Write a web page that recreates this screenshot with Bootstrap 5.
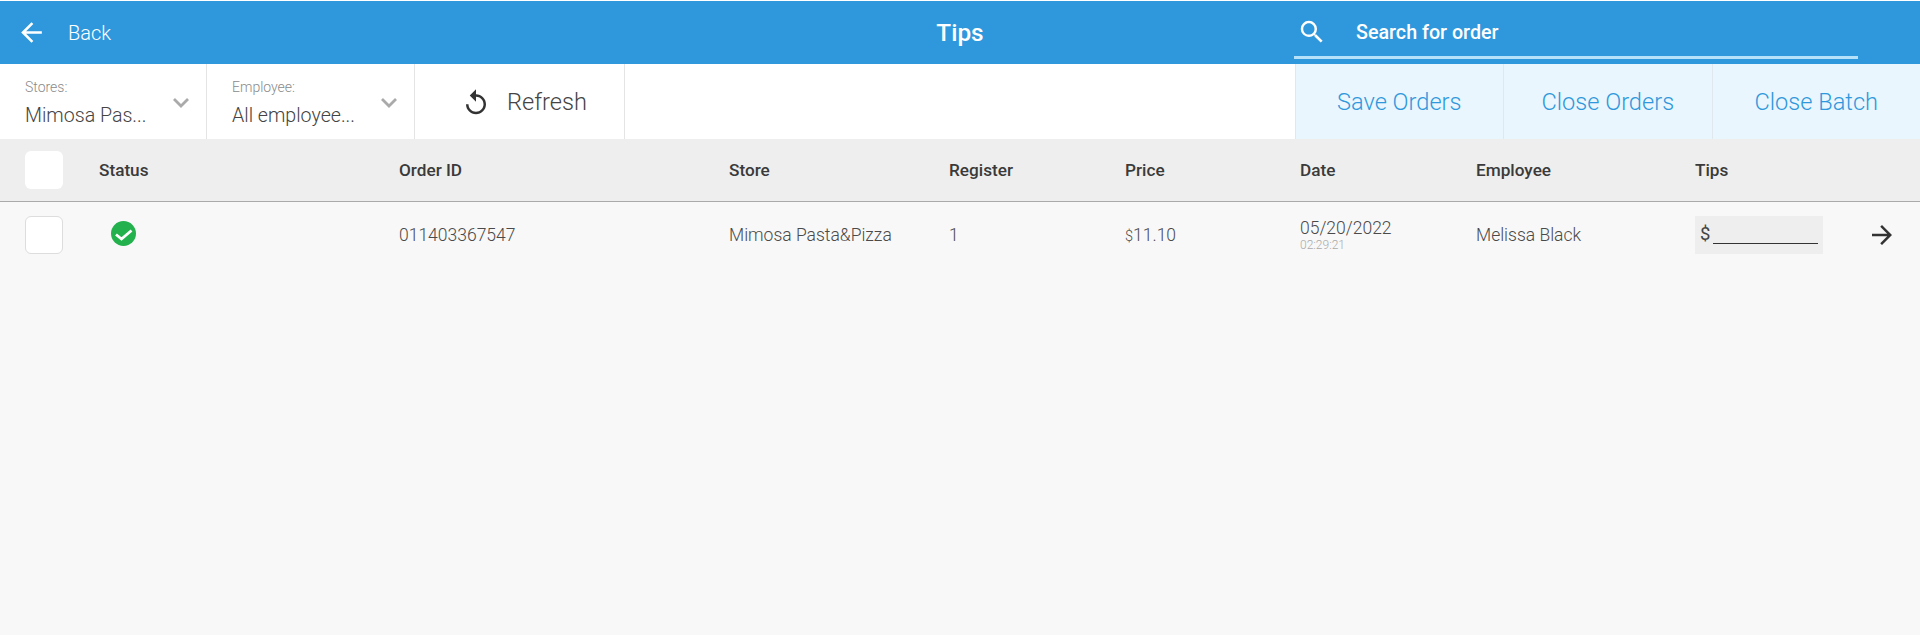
<!doctype html>
<html lang="en"><head><meta charset="utf-8"><title>Tips</title>
<link href="https://cdn.jsdelivr.net/npm/bootstrap@5.3.0/dist/css/bootstrap.min.css" rel="stylesheet">
<style>
html,body{height:100%}
body{font-family:Roboto,"Liberation Sans",sans-serif;background:#f8f8f8;color:#333;overflow:hidden}
.top-edge{height:1px;background:#fff}
.app-head{height:63px;background:#2f98dc;color:#fff}
.head-side{flex:0 0 1294px}
.back-link{color:#fff;text-decoration:none;font-weight:300;font-size:20px;padding-left:16px;gap:21px}
.head-title{font-size:24.4px;font-weight:500;left:960px;top:0;transform:translateX(-50%);line-height:64px}
.search-box{width:564px;height:58px;border-bottom:3px solid #b5e1fa;padding:4px 0 0 3px;gap:29px}
.search-field{background:transparent;border:0;outline:0;color:#fff;font-size:19.7px;font-weight:500;padding:5px 0 0;width:400px}
.search-field::placeholder{color:#fff;opacity:1}
.search-ico{margin-top:3px}
.tool-row{height:75px;background:#fff}
.pick-cell{border-right:1px solid #e4e4e4;width:207px;padding:0 16px 0 25px}
.pick-cell+.pick-cell{width:208px;padding-left:25px}
.pick-label{font-size:14px;font-weight:300;color:#8a8a8a;line-height:18px}
.pick-value{font-size:19.6px;font-weight:300;color:#444;line-height:26px;margin-top:7px}
.pick-text{margin-top:3px}
.pick-arrow{margin-top:2px}
.refresh-cell{width:210px;border-right:1px solid #e4e4e4;font-size:23.6px;font-weight:300;gap:16px;color:#444;padding:2px 0 0 46px}
.act-cell{width:208.5px;background:#e9f6fd;border-left:1px solid #dfe8ed;color:#2f98dc;font-size:23.6px;font-weight:300;padding-top:2px}
.grid-cols{display:grid;grid-template-columns:74px 300px 330px 220px 176px 175px 176px 219px 1fr;padding-left:25px;align-items:center}
.table-head{height:63px;background:#eee;border-bottom:1px solid #aaa;font-size:17.2px;font-weight:500;color:#3a3a3a;padding-top:1px}
.head-box{margin-top:-1px}
.table-line{height:66px;font-size:17.5px;font-weight:300;color:#4a4a4a}
.tick-box{width:38px;height:38px;background:#fff;border-radius:6px}
.tick-line{border:1px solid #ddd}
.status-ico{margin:-3px 0 0 12px}
.dollar-small{font-size:14.5px}
.date-sub{font-size:12px;color:#aaa;line-height:13px;margin-top:1px}
.date-main{line-height:20px}
.tip-field{width:128px;height:38px;background:#eee;padding:0 5px;gap:3px;font-size:18.5px;font-weight:400;color:#444}
.tip-blank{flex:1;border-bottom:1px solid #333;height:28px;align-self:flex-start}
.row-arrow{margin-right:23px}
</style></head>
<body>
<div class="top-edge"></div>
<header class="app-head d-flex align-items-start position-relative">
  <div class="head-side align-self-stretch d-flex align-items-center">
    <a class="back-link d-flex align-items-center" href="#">
      <svg width="31" height="31" viewBox="0 0 24 24" fill="#fff"><path d="M20 11H7.83l5.59-5.59L12 4l-8 8 8 8 1.41-1.41L7.83 13H20z"/></svg><span>Back</span></a>
  </div>
  <div class="head-title position-absolute">Tips</div>
  <div class="search-box d-flex align-items-center">
    <svg class="search-ico" width="30" height="30" viewBox="0 0 24 24" fill="#fff"><path d="M15.5 14h-.79l-.28-.27A6.47 6.47 0 0 0 16 9.5 6.5 6.5 0 1 0 9.5 16c1.61 0 3.09-.59 4.23-1.57l.27.28v.79l5 4.99L20.49 19l-4.99-5zm-6 0C7.01 14 5 11.99 5 9.5S7.01 5 9.5 5 14 7.01 14 9.5 11.99 14 9.5 14z"/></svg>
    <input class="search-field" type="text" placeholder="Search for order">
  </div>
</header>
<div class="tool-row d-flex">
  <div class="pick-cell d-flex align-items-center justify-content-between">
    <div class="pick-text"><div class="pick-label">Stores:</div><div class="pick-value">Mimosa Pas...</div></div>
    <svg class="pick-arrow" width="18" height="12" viewBox="0 0 18 12" fill="none" stroke="#aaa" stroke-width="2.8"><path d="M2 2l7 7 7-7"/></svg>
  </div>
  <div class="pick-cell d-flex align-items-center justify-content-between">
    <div class="pick-text"><div class="pick-label">Employee:</div><div class="pick-value">All employee...</div></div>
    <svg class="pick-arrow" width="18" height="12" viewBox="0 0 18 12" fill="none" stroke="#aaa" stroke-width="2.8"><path d="M2 2l7 7 7-7"/></svg>
  </div>
  <div class="refresh-cell d-flex align-items-center">
    <svg width="30" height="30" viewBox="0 0 24 24" fill="#333"><path d="M12 5V1L7 6l5 5V7c3.31 0 6 2.69 6 6s-2.69 6-6 6-6-2.69-6-6H4c0 4.42 3.58 8 8 8s8-3.58 8-8-3.58-8-8-8z"/></svg>Refresh
  </div>
  <div class="flex-grow-1"></div>
  <div class="act-cell d-flex align-items-center justify-content-center">Save Orders</div>
  <div class="act-cell d-flex align-items-center justify-content-center">Close Orders</div>
  <div class="act-cell d-flex align-items-center justify-content-center">Close Batch</div>
</div>
<div class="table-head grid-cols">
  <div class="tick-box head-box"></div><div>Status</div><div>Order ID</div><div>Store</div><div>Register</div><div>Price</div><div>Date</div><div>Employee</div><div>Tips</div>
</div>
<div class="table-line grid-cols">
  <div class="tick-box tick-line"></div>
  <div><svg class="status-ico d-block" width="25" height="25" viewBox="0 0 25 25"><circle cx="12.5" cy="12.5" r="12.5" fill="#22b14c"/><path d="M5 13.5l5.5 4.5 10-8.5" fill="none" stroke="#fff" stroke-width="2.8"/></svg></div>
  <div>011403367547</div>
  <div>Mimosa Pasta&amp;Pizza</div>
  <div>1</div>
  <div><span class="dollar-small">$</span>11.10</div>
  <div><div class="date-main">05/20/2022</div><div class="date-sub">02:29:21</div></div>
  <div>Melissa Black</div>
  <div class="d-flex align-items-center justify-content-between">
    <div class="tip-field d-flex align-items-center"><span>$</span><span class="tip-blank"></span></div>
    <svg class="row-arrow" width="30" height="30" viewBox="0 0 24 24" fill="#333"><path d="M12 4l-1.41 1.41L16.17 11H4v2h12.17l-5.58 5.59L12 20l8-8z"/></svg>
  </div>
</div>
<script src="https://cdn.jsdelivr.net/npm/bootstrap@5.3.0/dist/js/bootstrap.bundle.min.js"></script>
</body></html>
